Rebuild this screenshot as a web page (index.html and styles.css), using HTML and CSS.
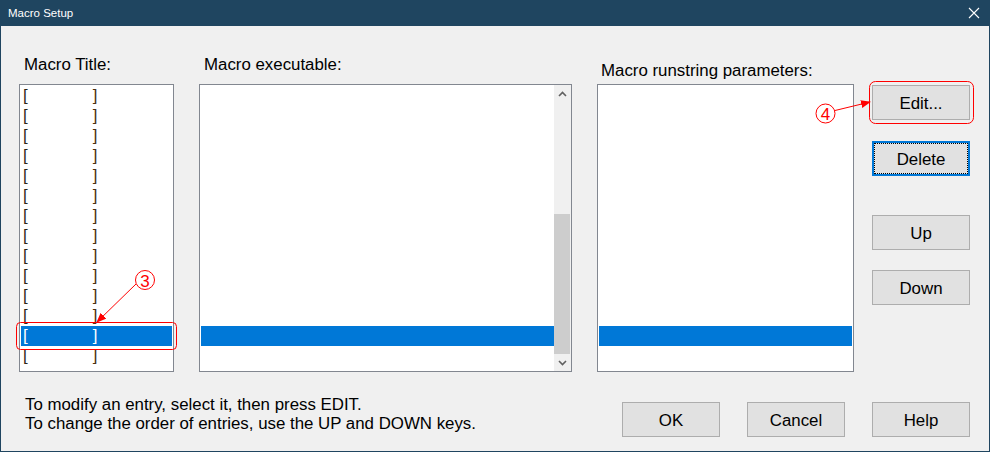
FILE: index.html
```html
<!DOCTYPE html>
<html>
<head>
<meta charset="utf-8">
<title>Macro Setup</title>
<link rel="stylesheet" href="styles.css">
</head>
<body>
<div class="win">
  <div class="titlebar">
    <span class="title">Macro Setup</span>
    <svg class="close" width="12" height="12" viewBox="0 0 12 12"><path d="M1 1L11 11M11 1L1 11" stroke="#fff" stroke-width="1.1" fill="none"/></svg>
  </div>
  <div class="body">
    <div class="toprow">
      <div class="col c1">
        <div class="label">Macro Title:</div>
        <div class="list">
          <div class="row"><span class="lb">[</span><span class="sp"></span><span class="rb">]</span></div>
          <div class="row"><span class="lb">[</span><span class="sp"></span><span class="rb">]</span></div>
          <div class="row"><span class="lb">[</span><span class="sp"></span><span class="rb">]</span></div>
          <div class="row"><span class="lb">[</span><span class="sp"></span><span class="rb">]</span></div>
          <div class="row"><span class="lb">[</span><span class="sp"></span><span class="rb">]</span></div>
          <div class="row"><span class="lb">[</span><span class="sp"></span><span class="rb">]</span></div>
          <div class="row"><span class="lb">[</span><span class="sp"></span><span class="rb">]</span></div>
          <div class="row"><span class="lb">[</span><span class="sp"></span><span class="rb">]</span></div>
          <div class="row"><span class="lb">[</span><span class="sp"></span><span class="rb">]</span></div>
          <div class="row"><span class="lb">[</span><span class="sp"></span><span class="rb">]</span></div>
          <div class="row"><span class="lb">[</span><span class="sp"></span><span class="rb">]</span></div>
          <div class="row"><span class="lb">[</span><span class="sp"></span><span class="rb">]</span></div>
          <div class="row sel"><span class="lb">[</span><span class="sp"></span><span class="rb">]</span></div>
          <div class="row"><span class="lb">[</span><span class="sp"></span><span class="rb">]</span></div>
        </div>
      </div>
      <div class="col c2">
        <div class="label">Macro executable:</div>
        <div class="list scroll">
          <div class="items">
            <div class="row"></div><div class="row"></div><div class="row"></div><div class="row"></div>
            <div class="row"></div><div class="row"></div><div class="row"></div><div class="row"></div>
            <div class="row"></div><div class="row"></div><div class="row"></div><div class="row"></div>
            <div class="row sel"></div>
            <div class="row"></div>
          </div>
          <div class="sb">
            <div class="sb-btn"><svg width="9" height="6" viewBox="0 0 9 6"><path d="M1 5L4.5 1.5L8 5" stroke="#606060" stroke-width="1.6" fill="none"/></svg></div>
            <div class="sb-track"><div class="sb-thumb"></div></div>
            <div class="sb-btn"><svg width="9" height="6" viewBox="0 0 9 6"><path d="M1 1L4.5 4.5L8 1" stroke="#606060" stroke-width="1.6" fill="none"/></svg></div>
          </div>
        </div>
      </div>
      <div class="col c3">
        <div class="label">Macro runstring parameters:</div>
        <div class="list">
          <div class="row"></div><div class="row"></div><div class="row"></div><div class="row"></div>
          <div class="row"></div><div class="row"></div><div class="row"></div><div class="row"></div>
          <div class="row"></div><div class="row"></div><div class="row"></div><div class="row"></div>
          <div class="row sel"></div>
          <div class="row"></div>
        </div>
      </div>
      <div class="col c4">
        <button class="btn b-edit">Edit...</button>
        <button class="btn b-delete focus">Delete</button>
        <button class="btn b-up">Up</button>
        <button class="btn b-down">Down</button>
      </div>
    </div>
    <div class="bottom">
      <div class="help-text">
        <div>To modify an entry, select it, then press EDIT.</div>
        <div>To change the order of entries, use the UP and DOWN keys.</div>
      </div>
      <div class="btns">
        <button class="btn">OK</button>
        <button class="btn">Cancel</button>
        <button class="btn">Help</button>
      </div>
    </div>
  </div>
  <svg class="annot" width="990" height="452" viewBox="0 0 990 452">
    <defs>
      <marker id="ah" markerWidth="10" markerHeight="8" refX="9" refY="4" orient="auto" markerUnits="userSpaceOnUse">
        <path d="M0 0L10 4L0 8z" fill="#f00"/>
      </marker>
    </defs>
    <rect x="16.5" y="322.5" width="160" height="27" rx="4" fill="none" stroke="#f00"/>
    <circle cx="145" cy="280" r="9.5" fill="none" stroke="#f00"/>
    <text class="anum" x="145" y="286.5">3</text>
    <line x1="136" y1="284" x2="97" y2="322" stroke="#f00" marker-end="url(#ah)"/>
    <rect x="869.5" y="81.5" width="104" height="42" rx="6" fill="none" stroke="#f00"/>
    <circle cx="825.5" cy="113.5" r="9.5" fill="none" stroke="#f00"/>
    <text class="anum" x="825.5" y="120">4</text>
    <line x1="835" y1="110.5" x2="870" y2="102" stroke="#f00" marker-end="url(#ah)"/>
  </svg>
</div>
</body>
</html>
```
FILE: styles.css
```css
* { box-sizing: border-box; }
html, body { margin: 0; padding: 0; background: #f0f0f0; }
body {
  font-family: "Liberation Sans", Arial, sans-serif;
  font-size: 16.85px;
  color: #000;
  width: 990px;
  height: 452px;
  overflow: hidden;
}
.win {
  position: relative;
  width: 990px;
  height: 452px;
  border: 1px solid #1f4560;
  border-top: 0;
  background: #f0f0f0;
}
.titlebar {
  height: 26px;
  margin: 0 -1px;
  background: #1f4560;
  color: #fff;
  display: flex;
  align-items: center;
  justify-content: space-between;
  padding: 0 10px 0 8px;
}
.title { font-size: 11.5px; line-height: 26px; }
.close { display: block; }
.body { padding: 0 19px 0 18px; }
.toprow { display: flex; height: 346px; }
.col { display: flex; flex-direction: column; }
.c1 { width: 155px; margin-right: 25px; }
.c2 { width: 373px; margin-right: 25px; }
.c3 { width: 257px; margin-right: 18px; }
.c4 { width: 98px; }
.label {
  height: 58px;
  padding: 29px 0 0 5px;
  line-height: 19px;
  white-space: nowrap;
}
.c3 .label { padding-top: 35px; padding-left: 4px; }
.list {
  height: 288px;
  border: 1px solid #828790;
  background: #fff;
  padding: 1px;
  overflow: hidden;
}
.row {
  height: 20px;
  line-height: 20px;
  padding-left: 2px;
  white-space: nowrap;
}
.row.sel { background: #0078d7; color: #fff; }
.lb { color: #2c2618; }
.rb { color: #4a3010; }
.sel .lb, .sel .rb { color: #fff; }
.sp { display: inline-block; width: 65px; }
.list.scroll { display: flex; padding: 0; }
.items { flex: 1; padding: 1px 0 0 1px; overflow: hidden; }
.sb {
  width: 17px;
  display: flex;
  flex-direction: column;
  background: #f0f0f0;
}
.sb-btn {
  height: 17px;
  display: flex;
  align-items: center;
  justify-content: center;
}
.sb-btn svg { display: block; }
.sb-track {
  flex: 1;
  display: flex;
  flex-direction: column;
  justify-content: flex-end;
  align-items: flex-start;
}
.sb-thumb { width: 16px; height: 140px; background: #cdcdcd; }
.btn {
  display: block;
  width: 98px;
  height: 35px;
  margin: 0;
  padding: 1px 0 0;
  background: #e1e1e1;
  border: 1px solid #adadad;
  font: inherit;
  line-height: 19px;
  color: #000;
  text-align: center;
}
.b-edit { margin-top: 59px; }
.b-delete { margin-top: 21px; }
.b-up { margin-top: 39px; }
.b-down { margin-top: 20px; }
.btn.focus {
  border: 2px solid #0078d7;
  outline: 1px dotted #000;
  outline-offset: -3px;
}
.bottom { display: flex; align-items: flex-start; }
.help-text {
  margin-top: 23px;
  padding-left: 6px;
  line-height: 19px;
  white-space: nowrap;
}
.btns {
  margin-left: auto;
  margin-top: 30px;
  display: flex;
  gap: 27px;
}
.annot {
  position: absolute;
  left: -1px;
  top: 0;
  pointer-events: none;
}
.anum {
  font-family: "Liberation Sans", Arial, sans-serif;
  font-size: 17px;
  fill: #f00;
  text-anchor: middle;
}
```
